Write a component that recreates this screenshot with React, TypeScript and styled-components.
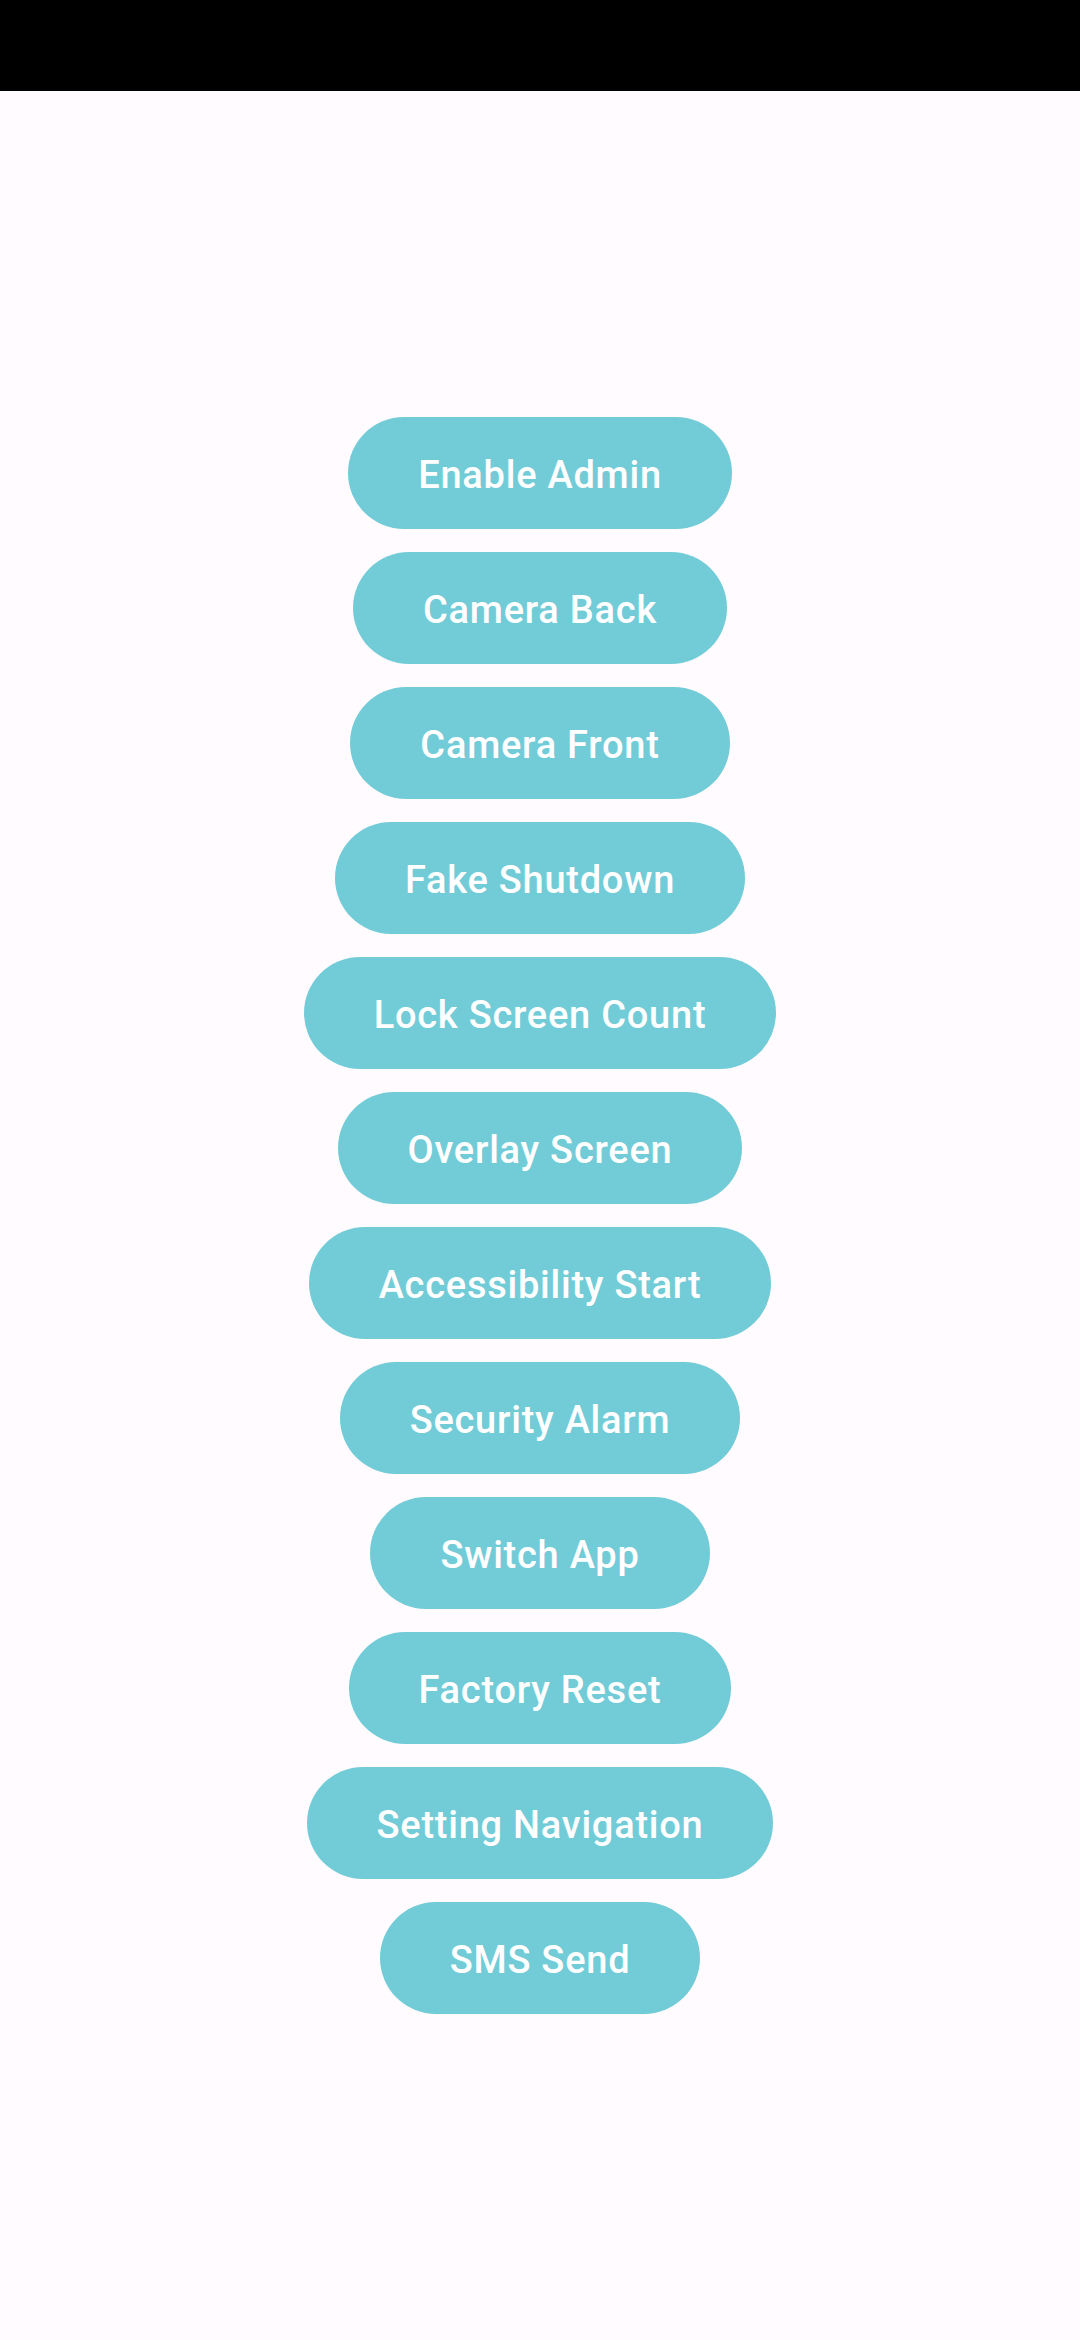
import React from "react";
import styled, { createGlobalStyle } from "styled-components";

const GlobalStyle = createGlobalStyle`
  html, body {
    margin: 0;
    padding: 0;
    background: #fffbfe;
  }
  body {
    font-family: Roboto, "Noto Sans", sans-serif;
  }
`;

const Screen = styled.div`
  display: flex;
  flex-direction: column;
  height: 2340px;
  width: 1080px;
`;

const StatusBar = styled.div`
  background: #000000;
  flex: 0 0 91px;
`;

const ButtonList = styled.div`
  align-items: center;
  display: flex;
  flex: 1;
  flex-direction: column;
  gap: 23px;
  justify-content: center;
`;

const ActionButton = styled.button`
  background: #72ccd7;
  border: none;
  border-radius: 56px;
  color: #ffffff;
  cursor: pointer;
  font-family: Roboto, sans-serif;
  font-size: 38px;
  font-weight: 500;
  height: 112px;
  letter-spacing: 0.02em;
  padding: 3px 70px 0;
  white-space: nowrap;
`;

const actions = [
  "Enable Admin",
  "Camera Back",
  "Camera Front",
  "Fake Shutdown",
  "Lock Screen Count",
  "Overlay Screen",
  "Accessibility Start",
  "Security Alarm",
  "Switch App",
  "Factory Reset",
  "Setting Navigation",
  "SMS Send",
];

export default function App() {
  return (
    <>
      <GlobalStyle />
      <Screen>
        <StatusBar />
        <ButtonList>
          {actions.map((label) => (
            <ActionButton key={label}>{label}</ActionButton>
          ))}
        </ButtonList>
      </Screen>
    </>
  );
}
